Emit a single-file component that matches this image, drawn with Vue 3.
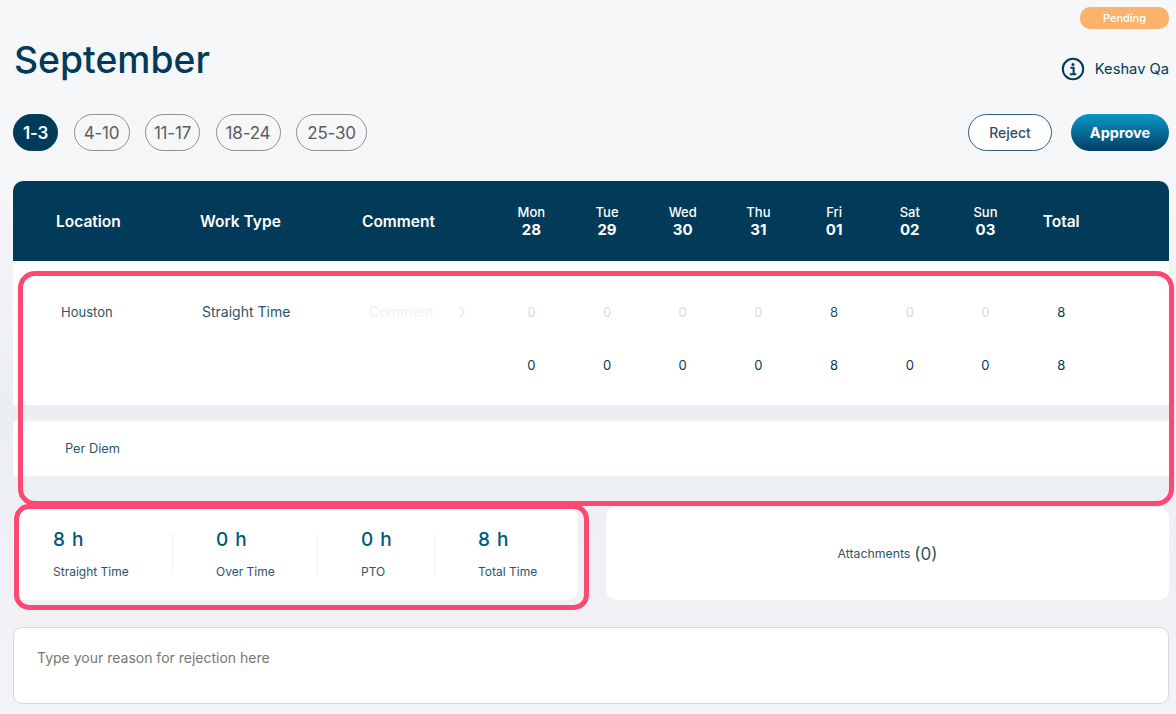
<script setup>
const weeks = [
  { label: '1-3', width: 45 },
  { label: '4-10', width: 56 },
  { label: '11-17', width: 55 },
  { label: '18-24', width: 65 },
  { label: '25-30', width: 71 }
]
const days = [
  { name: 'Mon', date: '28', hours: 0 },
  { name: 'Tue', date: '29', hours: 0 },
  { name: 'Wed', date: '30', hours: 0 },
  { name: 'Thu', date: '31', hours: 0 },
  { name: 'Fri', date: '01', hours: 8 },
  { name: 'Sat', date: '02', hours: 0 },
  { name: 'Sun', date: '03', hours: 0 }
]
const stats = [
  { value: '8 h', label: 'Straight Time' },
  { value: '0 h', label: 'Over Time' },
  { value: '0 h', label: 'PTO' },
  { value: '8 h', label: 'Total Time' }
]
</script>

<template>
  <div class="page">
    <div class="status-row">
      <span class="status">Pending</span>
    </div>

    <div class="title-row">
      <h1>September</h1>
      <div class="user">
        <svg width="24" height="24" viewBox="0 0 24 24" fill="none" stroke="#023b59">
          <circle cx="12" cy="12" r="10.2" stroke-width="2" />
          <circle cx="12" cy="7.4" r="1.5" fill="#023b59" stroke="none" />
          <path d="M9.4 10.8h3.2v6.2M8.8 17.2h6.4" stroke-width="2" />
        </svg>
        <span>Keshav Qa</span>
      </div>
    </div>

    <div class="action-row">
      <div class="weeks">
        <button
          v-for="(week, i) in weeks"
          :key="week.label"
          :class="['week', { 'week--active': i === 0 }]"
          :style="{ width: week.width + 'px' }"
        >{{ week.label }}</button>
      </div>
      <div class="actions">
        <button class="btn-reject">Reject</button>
        <button class="btn-approve">Approve</button>
      </div>
    </div>

    <div class="grid-row grid-head">
      <div>Location</div>
      <div>Work Type</div>
      <div>Comment</div>
      <div v-for="day in days" :key="day.name" class="day">
        <span class="day-name">{{ day.name }}</span>
        <span class="day-date">{{ day.date }}</span>
      </div>
      <div class="num">Total</div>
    </div>

    <div class="entry">
      <div class="grid-row entry-line">
        <div class="location">Houston</div>
        <div class="work-type">Straight Time</div>
        <div class="comment">
          <span>Comment</span>
          <svg width="8" height="12" viewBox="0 0 8 12" fill="none" stroke="#e6e8ec" stroke-width="1.4">
            <path d="M1.5 1l5 5-5 5" />
          </svg>
        </div>
        <div v-for="day in days" :key="day.name" :class="['num', { 'num--empty': !day.hours }]">{{ day.hours }}</div>
        <div class="num num--total">8</div>
      </div>
      <div class="grid-row entry-line entry-line--sum">
        <div></div>
        <div></div>
        <div></div>
        <div v-for="day in days" :key="day.name" class="num">{{ day.hours }}</div>
        <div class="num num--total">8</div>
      </div>
    </div>

    <div class="per-diem">Per Diem</div>

    <div class="cards">
      <div class="stats">
        <div v-for="stat in stats" :key="stat.label" class="stat">
          <div class="stat-value">{{ stat.value }}</div>
          <div class="stat-label">{{ stat.label }}</div>
        </div>
      </div>
      <div class="attachments">Attachments <span>(0)</span></div>
    </div>

    <textarea class="reason" placeholder="Type your reason for rejection here"></textarea>

    <div class="mark mark--table"></div>
    <div class="mark mark--stats"></div>
  </div>
</template>

<style scoped>
.page {
  position: relative;
  box-sizing: border-box;
  height: 714px;
  padding: 7px 7px 0 13px;
  overflow: hidden;
  background: linear-gradient(180deg, #f6f7f9 0%, #f5f6f8 25%, #ebeef3 57%, #eef0f4 75%, #f3f4f7 100%);
  font-family: Inter, "Liberation Sans", sans-serif;
  color: #023b59;
}

.status-row {
  display: flex;
  justify-content: flex-end;
}

.status {
  width: 89px;
  height: 22px;
  border-radius: 10px;
  background: #fbb36b;
  color: #fff;
  font-size: 11px;
  font-weight: 500;
  line-height: 22px;
  text-align: center;
}

.title-row {
  display: flex;
  justify-content: space-between;
  align-items: center;
  height: 61px;
  margin-top: 1px;
}

h1 {
  margin: -2px 0 0 1px;
  font-size: 37.3px;
  font-weight: 500;
  line-height: 44px;
}

.user {
  display: flex;
  align-items: center;
  gap: 9px;
  margin-top: 17px;
  font-size: 14.7px;
}

.user svg {
  margin-right: 1px;
}

.action-row {
  display: flex;
  justify-content: space-between;
  margin-top: 23px;
}

.weeks,
.actions {
  display: flex;
}

.weeks {
  gap: 15.5px;
}

.actions {
  gap: 19px;
}

button {
  height: 37px;
  padding: 0;
  font-family: inherit;
  cursor: pointer;
}

.week {
  border: 1px solid #8f8f8f;
  border-radius: 19px;
  background: transparent;
  color: #5d5d5d;
  font-size: 17px;
  letter-spacing: -0.2px;
}

.week--active {
  border-color: #023b59;
  background: #023b59;
  color: #fff;
  font-weight: 600;
}

.btn-reject {
  width: 84px;
  border: 1px solid #2f6075;
  border-radius: 19px;
  background: #fff;
  color: #30505f;
  font-size: 14px;
  font-weight: 500;
}

.btn-approve {
  width: 98px;
  border: none;
  border-radius: 19px;
  background: linear-gradient(180deg, #0a98c9 0%, #023f63 100%);
  color: #fff;
  font-size: 14.5px;
  font-weight: 700;
}

.grid-row {
  display: grid;
  grid-template-columns: 144px 162px 131.5px repeat(8, 75.7px);
  padding-left: 43px;
  align-items: center;
}

.grid-head {
  height: 80px;
  margin-top: 30px;
  border-radius: 10px 10px 0 0;
  background: #023b59;
  color: #fff;
  font-size: 15.5px;
  font-weight: 600;
}

.day {
  display: flex;
  flex-direction: column;
  align-items: center;
}

.day-name {
  font-size: 13px;
  font-weight: 500;
  line-height: 17px;
}

.day-date {
  font-size: 15px;
  font-weight: 700;
  line-height: 18px;
}

.num {
  text-align: center;
}

.entry {
  box-sizing: border-box;
  height: 144px;
  padding-top: 24px;
  background: #fff;
  font-size: 13px;
  color: #2d5468;
}

.entry-line {
  height: 53px;
}

.entry-line--sum {
  color: #023b59;
}

.location {
  padding-left: 5px;
  font-size: 13px;
}

.work-type {
  padding-left: 2px;
  font-size: 14px;
}

.comment {
  display: flex;
  align-items: center;
  gap: 25px;
  padding-left: 7px;
  color: #eff1f4;
  font-size: 14px;
}

.num--empty {
  color: #d9dcdf;
}

.entry-line--sum .num--empty {
  color: inherit;
}

.num--total {
  color: #023b59;
}

.per-diem {
  height: 55px;
  margin-top: 16px;
  padding-left: 52px;
  background: #fff;
  color: #2d5468;
  font-size: 12.8px;
  line-height: 55px;
}

.cards {
  display: flex;
  gap: 28px;
  height: 93px;
  margin-top: 31px;
}

.stats {
  display: grid;
  grid-template-columns: 159px 145px 117px 1fr;
  align-items: center;
  width: 565px;
  border-radius: 10px;
  background: #fff;
}

.stat {
  box-sizing: border-box;
  height: 41px;
  padding-left: 43px;
  border-left: 1px solid #f0f1f3;
}

.stat:first-child {
  padding-left: 40px;
  border-left: none;
}

.stat-value {
  margin-top: -5px;
  color: #00587c;
  font-size: 19px;
  font-weight: 500;
  letter-spacing: 1px;
  line-height: 24px;
}

.stat-label {
  margin-top: 13px;
  color: #2d5468;
  font-size: 12px;
  line-height: 14px;
}

.attachments {
  display: flex;
  flex: 1;
  align-items: center;
  justify-content: center;
  gap: 4px;
  border-radius: 10px;
  background: #fff;
  color: #2d5468;
  font-size: 12.3px;
}

.attachments span {
  font-size: 17px;
}

.reason {
  display: block;
  box-sizing: border-box;
  width: 100%;
  height: 77px;
  margin-top: 27px;
  padding: 21px 23px;
  border: 1px solid #d5d8dc;
  border-radius: 9px;
  background: #fff;
  font-family: inherit;
  font-size: 14px;
  resize: none;
}

.reason::placeholder {
  color: #777;
}

/* annotation frames drawn over the screenshot */
.mark {
  position: absolute;
  box-sizing: border-box;
  border: 5px solid #fb4974;
  pointer-events: none;
}

.mark--table {
  left: 18px;
  top: 271px;
  width: 1156px;
  height: 235px;
  border-radius: 17px;
}

.mark--stats {
  left: 14px;
  top: 504px;
  width: 575px;
  height: 106px;
  border-radius: 15px;
}
</style>
